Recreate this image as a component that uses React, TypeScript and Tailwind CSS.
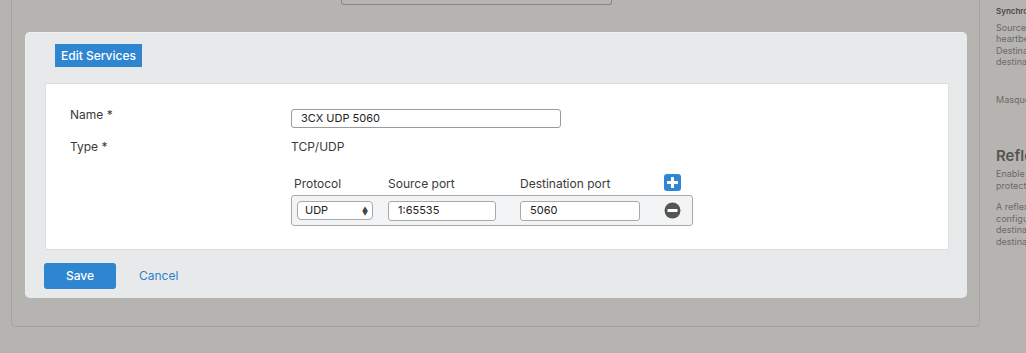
import React from "react";

function PlusIcon() {
  return (
    <svg width="17" height="17" viewBox="0 0 17 17">
      <rect x="0" y="0" width="17" height="17" rx="3" fill="#2f86d4" />
      <rect x="7" y="3" width="3" height="11" rx="0.5" fill="#fff" />
      <rect x="3" y="7" width="11" height="3" rx="0.5" fill="#fff" />
    </svg>
  );
}

function MinusIcon() {
  return (
    <svg width="17" height="17" viewBox="0 0 17 17">
      <circle cx="8.5" cy="8.5" r="8" fill="#555555" />
      <rect x="3.5" y="7" width="10" height="3" rx="0.5" fill="#fff" />
    </svg>
  );
}

export default function App() {
  return (
    <div
      className="flex w-[1026px] h-[353px] overflow-hidden bg-[#b5b4b0] text-[#333]"
      style={{ fontFamily: "Inter, 'Noto Sans', sans-serif" }}
    >
      {/* left dimmed page */}
      <div className="w-[980px] pl-[11px] shrink-0">
        <div className="h-[327px] border-l border-r border-b border-[#a3a29e] rounded-b-[5px] flex flex-col">
          <div className="flex pl-[329px]">
            <div className="w-[271px] h-[5px] border-l border-r border-b border-[#86878a] rounded-b-[3px]" />
          </div>
          <div className="mt-[27px] ml-[13px] w-[942px] h-[266px] bg-[#e8e9eb] rounded-[5px] border-t border-l border-[#efefef] flex flex-col">
            <div className="flex pl-[29px] pt-[11px]">
              <div className="h-[23px] w-[87px] bg-[#2f86d0] text-white text-[12px] font-medium flex items-center justify-center">
                Edit Services
              </div>
            </div>
            <div className="mt-[16px] ml-[19px] w-[904px] h-[167px] bg-white border border-[#dcdcdc] rounded-[2px] pl-[24px] text-[12px] text-[#3a3a3a]">
              <div className="flex items-start mt-[25px] h-[19px]">
                <div className="w-[221px] leading-[12px]">Name *</div>
                <div className="w-[270px] h-[19px] border border-[#9a9a9a] rounded-[3px] pl-[9px] flex items-center text-[11px] text-[#222]">
                  3CX UDP 5060
                </div>
              </div>
              <div className="flex items-center mt-[9px] h-[19px]">
                <div className="w-[221px]">Type *</div>
                <div>TCP/UDP</div>
              </div>
              <div className="flex items-end mt-[18px] h-[17px] pl-[221px]">
                <div className="w-[97px] pl-[3px] leading-[14px]">Protocol</div>
                <div className="w-[132px] leading-[14px]">Source port</div>
                <div className="w-[144px] leading-[14px]">Destination port</div>
                <PlusIcon />
              </div>
              <div className="ml-[221px] mt-[4px] w-[402px] h-[31px] border border-[#a9a9a9] rounded-[3px] bg-[#f3f4f5] flex items-center pl-[5px]">
                <div className="w-[76px] h-[19px] bg-white border border-[#a8a8a8] rounded-[4px] flex items-center justify-between pl-[7px] pr-[4px] text-[11px] text-[#222]">
                  <span>UDP</span>
                  <span className="flex flex-col text-[6px] leading-[5px] text-[#444]">
                    <span>▲</span>
                    <span>▼</span>
                  </span>
                </div>
                <div className="ml-[15px] w-[108px] h-[20px] bg-white border border-[#a8a8a8] rounded-[3px] flex items-center pl-[9px] text-[11px] text-[#222]">
                  1:65535
                </div>
                <div className="ml-[24px] w-[120px] h-[20px] bg-white border border-[#a8a8a8] rounded-[3px] flex items-center pl-[9px] text-[11px] text-[#222]">
                  5060
                </div>
                <div className="ml-[24px] flex items-center">
                  <MinusIcon />
                </div>
              </div>
            </div>
            <div className="flex items-center mt-[13px] ml-[18px]">
              <div className="w-[72px] h-[26px] bg-[#2f86d0] rounded-[3px] text-white text-[12px] font-medium flex items-center justify-center">
                Save
              </div>
              <div className="ml-[23px] text-[12px] text-[#2f7fc8]">Cancel</div>
            </div>
          </div>
        </div>
      </div>
      {/* right dimmed panel */}
      <div className="flex-1 pl-[16px] text-[#6b6a67] text-[9px] leading-[11.5px] whitespace-nowrap overflow-hidden">
        <div className="mt-[6px] text-[8px] font-semibold text-[#4a4a48]">Synchronization</div>
        <div className="mt-[4px]">
          <div>Source</div>
          <div>heartbeat</div>
          <div>Destination</div>
          <div>destination</div>
        </div>
        <div className="mt-[26px]">Masquerade</div>
        <div className="mt-[42px] text-[15px] leading-[18px] font-semibold text-[#555553]">Reflexive</div>
        <div className="mt-[3px]">
          <div>Enable</div>
          <div>protection</div>
        </div>
        <div className="mt-[10px]">
          <div>A reflexive</div>
          <div>configured</div>
          <div>destination</div>
          <div>destination</div>
        </div>
      </div>
    </div>
  );
}
